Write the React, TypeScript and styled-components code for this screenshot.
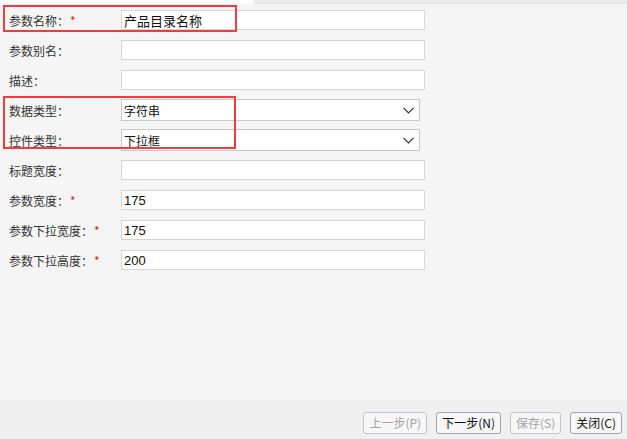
import styled, { createGlobalStyle } from 'styled-components';

const GlobalStyle = createGlobalStyle`
  html, body {
    margin: 0;
    padding: 0;
    height: 100%;
  }
  body {
    font-family: "Liberation Sans", "Noto Sans CJK SC", sans-serif;
    font-size: 12px;
    color: #222;
  }
  #root {
    height: 100%;
  }
`;

const Page = styled.div`
  display: flex;
  flex-direction: column;
  height: 100vh;
  width: 100%;
  overflow: hidden;
`;

const TabStrip = styled.div`
  display: flex;
  height: 4px;
  flex-shrink: 0;
`;

const TabPiece = styled.div<{ $active?: boolean }>`
  width: ${(p) => (p.$active ? '254px' : 'auto')};
  flex: ${(p) => (p.$active ? 'none' : '1')};
  background: ${(p) => (p.$active ? '#ffffff' : '#ececec')};
  border-bottom: ${(p) => (p.$active ? 'none' : '1px solid #e2e2e2')};
  box-sizing: border-box;
`;

const FormArea = styled.div`
  position: relative;
  flex: 1;
  background: #f5f5f5;
  padding-top: 1px;
`;

const Row = styled.div`
  display: grid;
  grid-template-columns: 112px auto;
  align-items: center;
  height: 30px;
  padding-left: 9px;
`;

const Label = styled.label`
  font-family: "Noto Sans CJK SC", sans-serif;
  font-size: 12px;
  color: #333;
  white-space: nowrap;
`;

const Required = styled.span`
  color: #e8141b;
  margin-left: 1px;
`;

const TextBox = styled.div`
  box-sizing: border-box;
  width: 304px;
  height: 20px;
  border: 1px solid #d6d5d2;
  background: #fff;
  padding-left: 2px;
  display: flex;
  align-items: center;
  font-family: "Liberation Sans", "Noto Sans CJK SC", sans-serif;
  font-size: 13px;
  color: #111;
`;

const SelectBox = styled.div`
  box-sizing: border-box;
  width: 299px;
  height: 22px;
  border: 1px solid #c9c9c9;
  background: #fff;
  padding: 0 5px 0 2px;
  display: flex;
  align-items: center;
  justify-content: space-between;
  font-family: "Noto Sans CJK SC", sans-serif;
  font-size: 12px;
  color: #111;
`;

const Chevron = styled.svg`
  width: 11px;
  height: 7px;
  margin-top: 1px;
`;

const Highlight = styled.div<{ $top: number; $height: number; $width: number }>`
  position: absolute;
  left: 3px;
  top: ${(p) => p.$top}px;
  width: ${(p) => p.$width}px;
  height: ${(p) => p.$height}px;
  border: 2px solid #f23b3f;
  box-sizing: border-box;
  pointer-events: none;
`;

const Footer = styled.div`
  flex-shrink: 0;
  height: 39px;
  background: #f0f0f0;
  display: flex;
  justify-content: flex-end;
  align-items: flex-end;
  gap: 9px;
  padding: 0 5px 5px 0;
  box-sizing: border-box;
`;

const Button = styled.button<{ $disabled?: boolean }>`
  height: 22px;
  padding: 0 5px;
  border: 1px solid ${(p) => (p.$disabled ? '#c2c6cc' : '#9ea3aa')};
  border-radius: 3px;
  background: #f7f7f7;
  color: ${(p) => (p.$disabled ? '#a3a3a3' : '#111')};
  font-family: "Noto Sans CJK SC", sans-serif;
  font-size: 12px;
  line-height: 20px;
  cursor: ${(p) => (p.$disabled ? 'default' : 'pointer')};
`;

type Field = {
  label: string;
  required?: boolean;
  value?: string;
  select?: boolean;
};

const FIELDS: Field[] = [
  { label: '参数名称：', required: true, value: '产品目录名称' },
  { label: '参数别名：' },
  { label: '描述：' },
  { label: '数据类型：', select: true, value: '字符串' },
  { label: '控件类型：', select: true, value: '下拉框' },
  { label: '标题宽度：' },
  { label: '参数宽度：', required: true, value: '175' },
  { label: '参数下拉宽度：', required: true, value: '175' },
  { label: '参数下拉高度：', required: true, value: '200' },
];

const ChevronIcon = () => (
  <Chevron viewBox="0 0 11 7">
    <path d="M0.5 0.8 L5.5 5.8 L10.5 0.8" fill="none" stroke="#333" strokeWidth="1.2" />
  </Chevron>
);

export default function App() {
  return (
    <Page>
      <GlobalStyle />
      <TabStrip>
        <TabPiece $active />
        <TabPiece />
      </TabStrip>
      <FormArea>
        {FIELDS.map(({ label, required, value, select }) => (
          <Row key={label}>
            <Label>
              {label}
              {required && <Required>*</Required>}
            </Label>
            {select ? (
              <SelectBox>
                <span>{value}</span>
                <ChevronIcon />
              </SelectBox>
            ) : (
              <TextBox>{value}</TextBox>
            )}
          </Row>
        ))}
        <Highlight $top={1} $height={27} $width={234} />
        <Highlight $top={92} $height={53} $width={233} />
      </FormArea>
      <Footer>
        <Button $disabled>上一步(P)</Button>
        <Button>下一步(N)</Button>
        <Button $disabled>保存(S)</Button>
        <Button>关闭(C)</Button>
      </Footer>
    </Page>
  );
}
